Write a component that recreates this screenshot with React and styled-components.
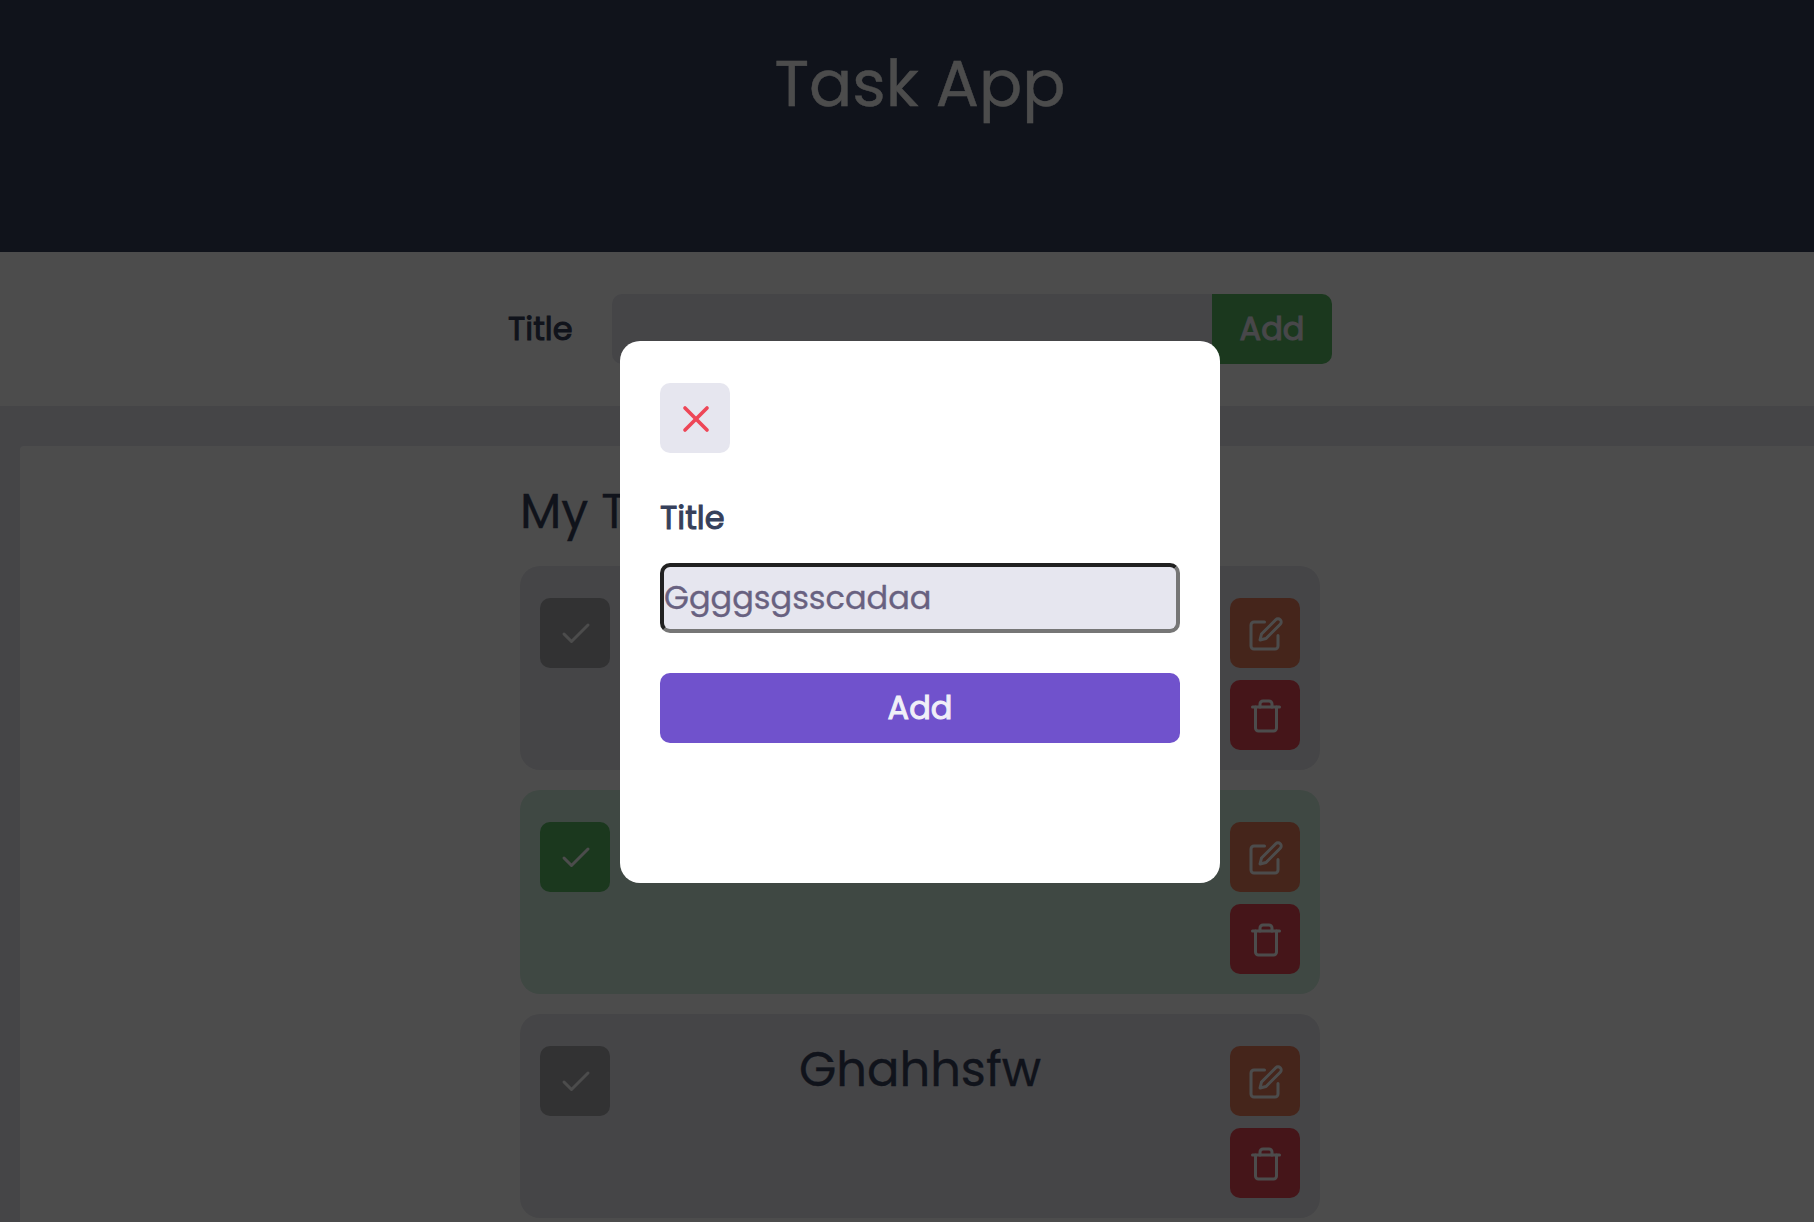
import React from "react";
import styled, { createGlobalStyle } from "styled-components";
import { FiCheck, FiEdit, FiTrash, FiX } from "react-icons/fi";

const color = {
  navy: "#36405b",
  surface: "#e6e6ef",
  card: "#e7e7ed",
  cardDone: "#d3f0e0",
  white: "#ffffff",
  green: "#5abb65",
  gray: "#a7a7ac",
  orange: "#e67c5b",
  red: "#e84854",
  cross: "#ee4657",
  purple: "#7052cc",
  ink: "#686180",
};

const Global = createGlobalStyle`
  *, *::before, *::after { box-sizing: border-box; }
  html, body { margin: 0; overflow: hidden; }
  body {
    background: ${color.surface};
    color: ${color.navy};
    font-family: Poppins, Inter, "Liberation Sans", sans-serif;
    font-feature-settings: "cv11";
  }
  button, input { font: inherit; font-feature-settings: inherit; }
`;

const Page = styled.div`
  width: 1840px;
  height: 1222px;
  display: flex;
  flex-direction: column;
  overflow: hidden;
`;

const Header = styled.header`
  height: 252px;
  flex: none;
  padding-top: 36px;
  background: ${color.navy};
  color: ${color.white};
  text-align: center;
`;

const AppTitle = styled.h1`
  margin: 0;
  font-size: 64px;
  line-height: 96px;
  font-weight: 400;
  -webkit-text-stroke: 0.4px;
`;

const FormBar = styled.section`
  height: 154px;
  flex: none;
  display: flex;
  align-items: flex-start;
  justify-content: center;
  padding-top: 42px;
  background: ${color.white};
`;

const Label = styled.label`
  font-size: 32px;
  line-height: ${(p) => p.$height}px;
  font-weight: 400;
  -webkit-text-stroke: 1px;
`;

const FormLabel = styled(Label)`
  width: 104px;
`;

const TitleInput = styled.input`
  width: 600px;
  height: 70px;
  border: 0;
  border-radius: 10px 0 0 10px;
  padding: 0 10px;
  background: ${color.surface};
  color: ${color.ink};
  font-size: 32px;
`;

const AddButton = styled.button`
  width: ${(p) => p.$width};
  height: 70px;
  border: 0;
  border-radius: ${(p) => p.$radius};
  padding: 0;
  background: ${(p) => p.$bg};
  color: #f0eff8;
  font-size: 32px;
  font-weight: 400;
  -webkit-text-stroke: 1px;
`;

const Board = styled.main`
  flex: 1;
  margin: 40px 20px 0;
  padding: 42px 500px 0;
  border-radius: 4px 4px 0 0;
  background: ${color.white};
`;

const BoardTitle = styled.h2`
  margin: 0 0 30px;
  font-size: 48px;
  line-height: 48px;
  font-weight: 400;
  -webkit-text-stroke: 0.3px;
`;

const TaskList = styled.ul`
  margin: 0;
  padding: 0;
  list-style: none;
  display: flex;
  flex-direction: column;
  gap: 20px;
`;

const TaskCard = styled.li`
  height: 204px;
  display: grid;
  grid-template-columns: 70px 1fr 70px;
  align-items: start;
  padding: 32px 20px;
  border-radius: 20px;
  background: ${(p) => (p.$done ? color.cardDone : color.card)};
`;

const TaskName = styled.h3`
  margin: 0;
  font-size: 48px;
  line-height: 48px;
  font-weight: 400;
  text-align: center;
  -webkit-text-stroke: 0.3px;
`;

const Actions = styled.div`
  display: flex;
  flex-direction: column;
  gap: 12px;
`;

const IconButton = styled.button`
  width: 70px;
  height: 70px;
  display: flex;
  align-items: center;
  justify-content: center;
  border: 0;
  border-radius: 10px;
  padding: 2px 0 0 2px;
  background: ${(p) => p.$bg};
  color: ${(p) => p.$fg || color.white};
`;

const Overlay = styled.div`
  position: fixed;
  top: 0;
  left: 0;
  width: 1840px;
  height: 1222px;
  display: flex;
  align-items: center;
  justify-content: center;
  padding-top: 2px;
  background: rgba(0, 0, 0, 0.7);
`;

const Modal = styled.div`
  width: 600px;
  height: 542px;
  display: flex;
  flex-direction: column;
  align-items: stretch;
  padding: 42px 40px;
  border-radius: 20px;
  background: ${color.white};
`;

const ModalLabel = styled(Label)`
  margin: 41px 0 21px;
`;

const ModalInput = styled.input`
  width: 100%;
  height: 70px;
  margin-bottom: 40px;
  padding: 0;
  border: 4px solid;
  border-color: #212121 #767676 #767676 #212121;
  border-radius: 10px;
  outline: none;
  background: ${color.surface};
  color: ${color.ink};
  font-size: 32px;
  -webkit-text-stroke: 0.3px;
`;

const tasks = [
  { id: 1, name: "Ggggsgsscadaa", done: false },
  { id: 2, name: "", done: true },
  { id: 3, name: "Ghahhsfw", done: false },
];

function Task({ name, done }) {
  return (
    <TaskCard $done={done}>
      <IconButton $bg={done ? color.green : color.gray} aria-label="Complete">
        <FiCheck size={36} />
      </IconButton>
      <TaskName>{name}</TaskName>
      <Actions>
        <IconButton $bg={color.orange} aria-label="Edit">
          <FiEdit size={36} />
        </IconButton>
        <IconButton $bg={color.red} aria-label="Delete">
          <FiTrash size={36} />
        </IconButton>
      </Actions>
    </TaskCard>
  );
}

export default function App() {
  return (
    <>
      <Global />
      <Page>
        <Header>
          <AppTitle>Task App</AppTitle>
        </Header>
        <FormBar>
          <FormLabel $height={70} htmlFor="new-title">Title</FormLabel>
          <TitleInput id="new-title" />
          <AddButton $bg={color.green} $width="120px" $radius="0 10px 10px 0">Add</AddButton>
        </FormBar>
        <Board>
          <BoardTitle>My Tasks</BoardTitle>
          <TaskList>
            {tasks.map((task) => (
              <Task key={task.id} name={task.name} done={task.done} />
            ))}
          </TaskList>
        </Board>
      </Page>
      <Overlay>
        <Modal role="dialog">
          <IconButton $bg={color.surface} $fg={color.cross} aria-label="Close">
            <FiX size={44} />
          </IconButton>
          <ModalLabel $height={48} htmlFor="edit-title">Title</ModalLabel>
          <ModalInput id="edit-title" defaultValue="Ggggsgsscadaa" />
          <AddButton $bg={color.purple} $width="100%" $radius="10px">Add</AddButton>
        </Modal>
      </Overlay>
    </>
  );
}
